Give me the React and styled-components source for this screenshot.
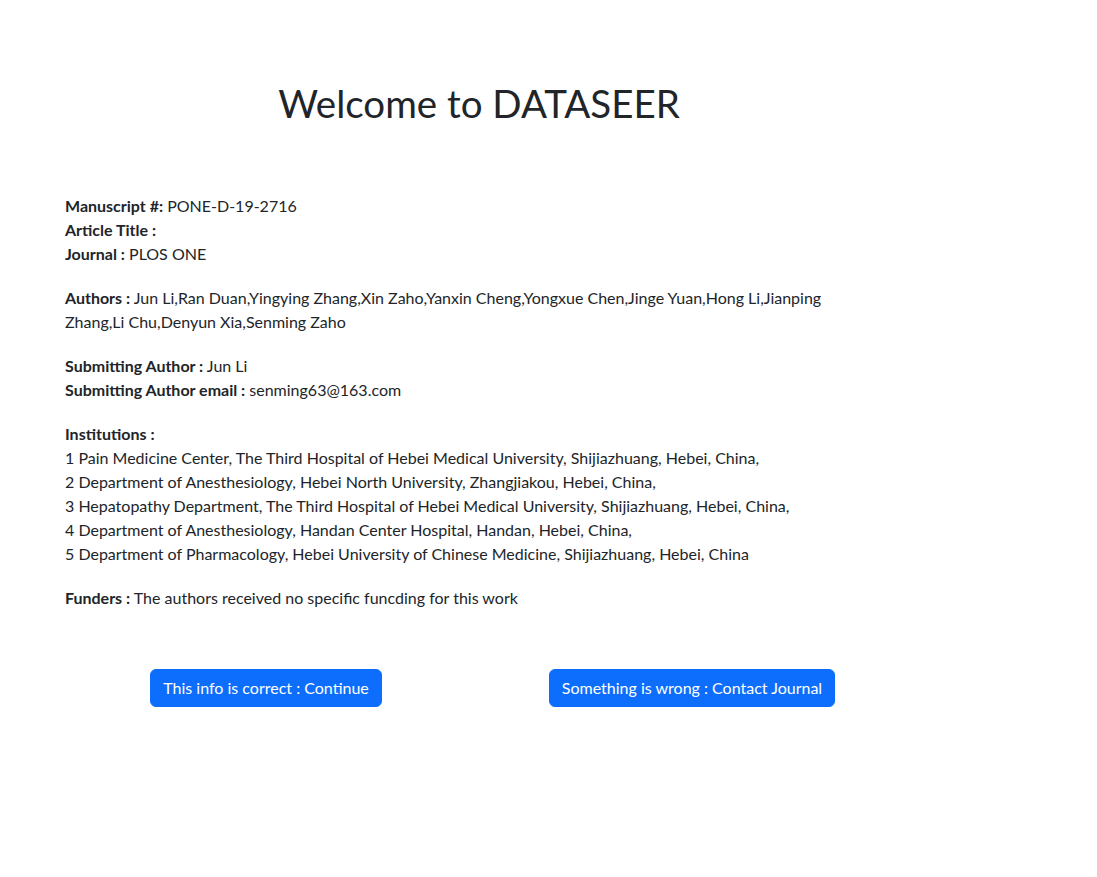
import React from 'react';
import styled, { createGlobalStyle } from 'styled-components';

const GlobalStyle = createGlobalStyle`
  body {
    margin: 0;
    background: #fff;
    color: #212529;
    font-family: Lato, "Noto Sans", sans-serif;
    font-size: 16px;
    line-height: 1.5;
  }
`;

const Page = styled.div`
  padding: 80px 0 0 65px;
`;

const Content = styled.div`
  width: 828px;
`;

const Title = styled.h1`
  margin: 0 0 68px;
  font-size: 38.5px;
  font-weight: 400;
  line-height: 1.2;
  text-align: center;
`;

const Block = styled.p`
  max-width: 810px;
  margin: 0 0 20px;
`;

const Label = styled.b`
  font-weight: 700;
`;

const ButtonRow = styled.div`
  display: grid;
  grid-template-columns: 1fr 1fr;
  justify-items: center;
  margin: 59px -12px 0;
`;

const Button = styled.button`
  height: 38px;
  padding: 6px 12px;
  border: 1px solid #0d6efd;
  border-radius: 6px;
  background: #0d6efd;
  color: #fff;
  font-family: inherit;
  font-size: 16px;
  line-height: 24px;
  cursor: pointer;
`;

const institutions = [
  '1 Pain Medicine Center, The Third Hospital of Hebei Medical University, Shijiazhuang, Hebei, China,',
  '2 Department of Anesthesiology, Hebei North University, Zhangjiakou, Hebei, China,',
  '3 Hepatopathy Department, The Third Hospital of Hebei Medical University, Shijiazhuang, Hebei, China,',
  '4 Department of Anesthesiology, Handan Center Hospital, Handan, Hebei, China,',
  '5 Department of Pharmacology, Hebei University of Chinese Medicine, Shijiazhuang, Hebei, China',
];

export default function App() {
  return (
    <Page>
      <GlobalStyle />
      <Content>
        <Title>Welcome to DATASEER</Title>
        <Block>
          <Label>Manuscript #:</Label> PONE-D-19-2716<br />
          <Label>Article Title :</Label><br />
          <Label>Journal :</Label> PLOS ONE
        </Block>
        <Block>
          <Label>Authors :</Label> Jun Li,Ran Duan,Yingying Zhang,Xin Zaho,Yanxin Cheng,Yongxue Chen,Jinge Yuan,Hong Li,Jianping Zhang,Li Chu,Denyun Xia,Senming Zaho
        </Block>
        <Block>
          <Label>Submitting Author :</Label> Jun Li<br />
          <Label>Submitting Author email :</Label> senming63@163.com
        </Block>
        <Block>
          <Label>Institutions :</Label>
          {institutions.map(line => (
            <React.Fragment key={line}><br />{line}</React.Fragment>
          ))}
        </Block>
        <Block>
          <Label>Funders :</Label> The authors received no specific funcding for this work
        </Block>
        <ButtonRow>
          <Button>This info is correct : Continue</Button>
          <Button>Something is wrong : Contact Journal</Button>
        </ButtonRow>
      </Content>
    </Page>
  );
}
